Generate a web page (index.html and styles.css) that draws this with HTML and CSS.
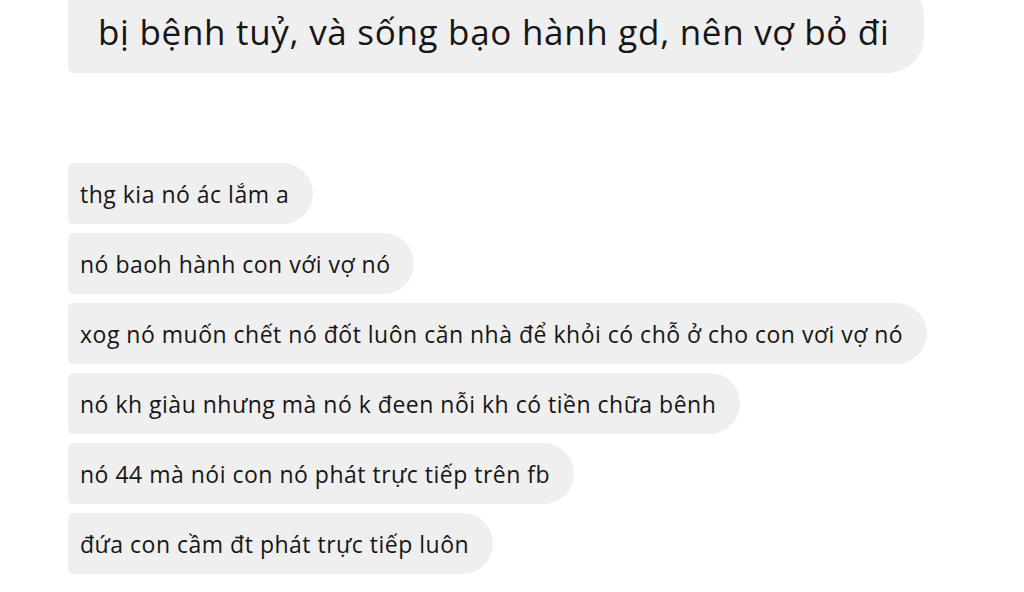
FILE: index.html
```html
<!DOCTYPE html>
<html lang="vi">
<head>
<meta charset="utf-8">
<title>Chat</title>
<link rel="stylesheet" href="styles.css">
</head>
<body>
<main class="chat">
  <div class="bubble bubble-big">bị bệnh tuỷ, và sống bạo hành gd, nên vợ bỏ đi</div>
  <div class="group">
    <div class="bubble">thg kia nó ác lắm a</div>
    <div class="bubble">nó baoh hành con với vợ nó</div>
    <div class="bubble">xog nó muốn chết nó đốt luôn căn nhà để khỏi có chỗ ở cho con vơi vợ nó</div>
    <div class="bubble">nó kh giàu nhưng mà nó k đeen nỗi kh có tiền chữa bênh</div>
    <div class="bubble">nó 44 mà nói con nó phát trực tiếp trên fb</div>
    <div class="bubble">đứa con cầm đt phát trực tiếp luôn</div>
  </div>
</main>
</body>
</html>
```
FILE: styles.css
```css
html, body {
  margin: 0;
  padding: 0;
  background: #ffffff;
}
body {
  width: 1024px;
  height: 592px;
  overflow: hidden;
  font-family: "Open Sans", "Noto Sans", sans-serif;
  color: #161616;
}
.chat {
  display: flex;
  flex-direction: column;
  align-items: flex-start;
  padding-left: 68px;
}
.bubble {
  background: #efefef;
  white-space: nowrap;
}
.bubble-big {
  margin-top: -20px;
  font-size: 35px;
  letter-spacing: 0.7px;
  line-height: 45px;
  padding: 29px 34px 19px 30px;
  border-radius: 6px 36px 36px 6px;
}
.group {
  margin-top: 90px;
  display: flex;
  flex-direction: column;
  align-items: flex-start;
  gap: 9px;
}
.group .bubble {
  font-size: 23px;
  letter-spacing: 0.5px;
  line-height: 29px;
  padding: 17px 24px 15px 12px;
  border-radius: 5px 31px 31px 5px;
}
```
